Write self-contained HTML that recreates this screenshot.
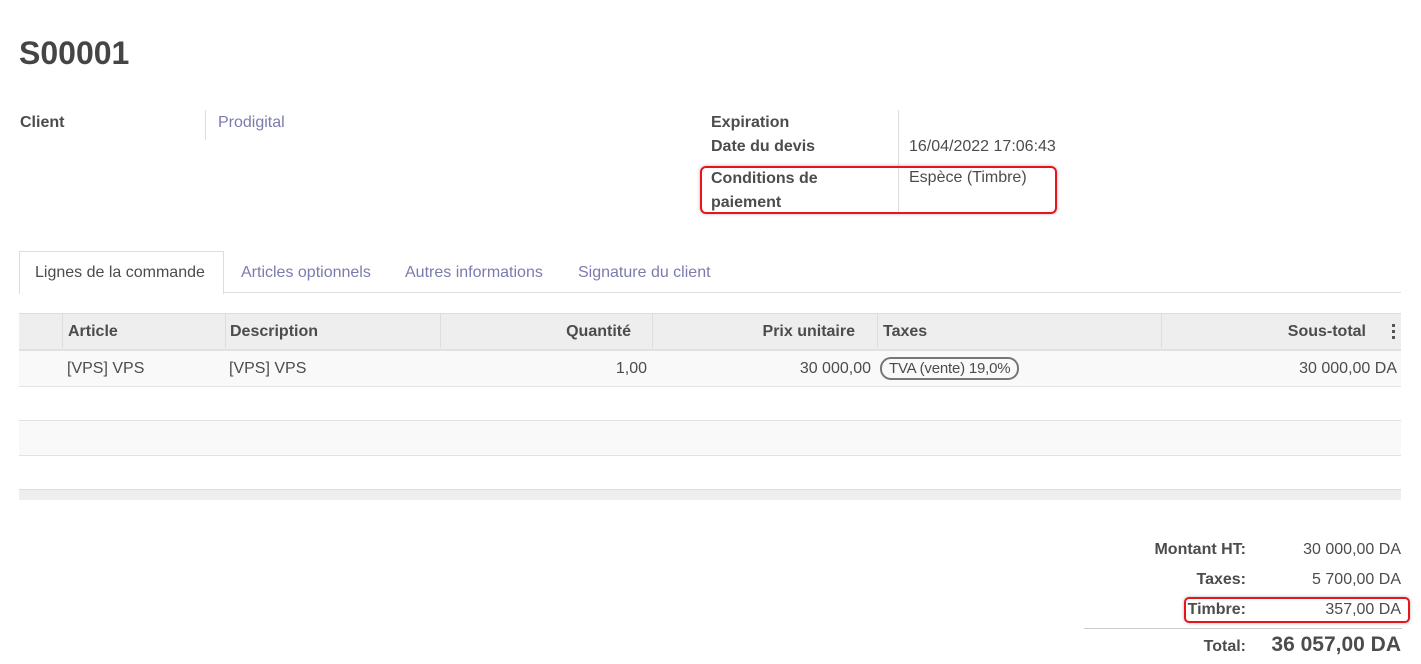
<!DOCTYPE html><html><head><meta charset="utf-8"><style>
body{margin:0;width:1421px;height:664px;background:#fff;font-family:"Liberation Sans",Arial,sans-serif;color:#4c4c4c;position:relative;overflow:hidden;font-size:16px}
.a{position:absolute;white-space:nowrap}
.b{font-weight:bold}
.l{color:#7c7bad}
.r{text-align:right}
</style></head><body>
<div class="a b" style="left:19px;top:35px;font-size:32px;color:#454545">S00001</div>
<div class="a b" style="left:20px;top:114px">Client</div>
<div class="a" style="left:205px;top:110px;width:1px;height:30px;background:#ddd"></div>
<div class="a l" style="left:218px;top:114px">Prodigital</div>
<div class="a b" style="left:711px;top:114px">Expiration</div>
<div class="a b" style="left:711px;top:138px">Date du devis</div>
<div class="a b" style="left:711px;top:167px;line-height:24px">Conditions de<br>paiement</div>
<div class="a" style="left:898px;top:110px;width:1px;height:104px;background:#ddd"></div>
<div class="a" style="left:909px;top:138px">16/04/2022 17:06:43</div>
<div class="a" style="left:909px;top:169px">Espèce (Timbre)</div>
<div class="a" style="left:700px;top:166px;width:353px;height:44px;border:2px solid #e8141c;border-radius:6px;box-shadow:0 0 3px rgba(0,0,0,.3)"></div>

<div class="a" style="left:19px;top:292px;width:1382px;height:1px;background:#ddd"></div>
<div class="a" style="left:19px;top:251px;width:203px;height:42px;border:1px solid #ddd;border-bottom:none;background:#fff"></div>
<div class="a" style="left:35px;top:264px">Lignes de la commande</div>
<div class="a l" style="left:241px;top:264px">Articles optionnels</div>
<div class="a l" style="left:405px;top:264px">Autres informations</div>
<div class="a l" style="left:578px;top:264px">Signature du client</div>

<div class="a" style="left:19px;top:313px;width:1382px;height:35px;background:#eee;border-top:1px solid #ddd;border-bottom:3px solid #dee2e6"></div>
<div class="a" style="left:62px;top:314px;width:1px;height:34px;background:#ddd"></div>
<div class="a" style="left:225px;top:314px;width:1px;height:34px;background:#ddd"></div>
<div class="a" style="left:440px;top:314px;width:1px;height:34px;background:#ddd"></div>
<div class="a" style="left:652px;top:314px;width:1px;height:34px;background:#ddd"></div>
<div class="a" style="left:877px;top:314px;width:1px;height:34px;background:#ddd"></div>
<div class="a" style="left:1161px;top:314px;width:1px;height:34px;background:#ddd"></div>
<div class="a b" style="left:68px;top:323px">Article</div>
<div class="a b" style="left:230px;top:323px">Description</div>
<div class="a b r" style="left:440px;width:191px;top:323px">Quantité</div>
<div class="a b r" style="left:652px;width:203px;top:323px">Prix unitaire</div>
<div class="a b" style="left:883px;top:323px">Taxes</div>
<div class="a b r" style="left:1161px;width:205px;top:323px">Sous-total</div>
<div class="a" style="left:1392px;top:324px;width:3px;height:3px;background:#555"></div>
<div class="a" style="left:1392px;top:330px;width:3px;height:3px;background:#555"></div>
<div class="a" style="left:1392px;top:336px;width:3px;height:3px;background:#555"></div>

<div class="a" style="left:19px;top:351px;width:1382px;height:35px;background:#f9f9f9;border-bottom:1px solid #e2e2e2"></div>
<div class="a" style="left:67px;top:360px">[VPS] VPS</div>
<div class="a" style="left:229px;top:360px">[VPS] VPS</div>
<div class="a r" style="left:440px;width:207px;top:360px">1,00</div>
<div class="a r" style="left:652px;width:219px;top:360px">30 000,00</div>
<div class="a" style="left:880px;top:357px;height:19px;line-height:19px;padding:0 7px;border:2px solid #777;border-radius:11px;font-size:15px;letter-spacing:-0.2px">TVA (vente) 19,0%</div>
<div class="a r" style="left:1161px;width:236px;top:360px">30 000,00 DA</div>
<div class="a" style="left:19px;top:420px;width:1382px;height:34px;background:#f9f9f9;border-top:1px solid #e2e2e2;border-bottom:1px solid #e2e2e2"></div>
<div class="a" style="left:19px;top:489px;width:1382px;height:10px;background:#eee;border-top:1px solid #ddd"></div>

<div class="a b r" style="left:1100px;width:146px;top:541px">Montant HT:</div>
<div class="a r" style="left:1260px;width:141px;top:541px">30 000,00 DA</div>
<div class="a b r" style="left:1100px;width:146px;top:571px">Taxes:</div>
<div class="a r" style="left:1260px;width:141px;top:571px">5 700,00 DA</div>
<div class="a b r" style="left:1100px;width:146px;top:601px">Timbre:</div>
<div class="a r" style="left:1260px;width:141px;top:601px">357,00 DA</div>
<div class="a" style="left:1184px;top:597px;width:222px;height:22px;border:2px solid #e8141c;border-radius:5px;box-shadow:0 0 3px rgba(0,0,0,.3)"></div>
<div class="a" style="left:1084px;top:628px;width:318px;height:1px;background:#ccc"></div>
<div class="a b r" style="left:1100px;width:146px;top:638px">Total:</div>
<div class="a b r" style="left:1230px;width:171px;top:633px;font-size:21px">36 057,00 DA</div>
</body></html>
